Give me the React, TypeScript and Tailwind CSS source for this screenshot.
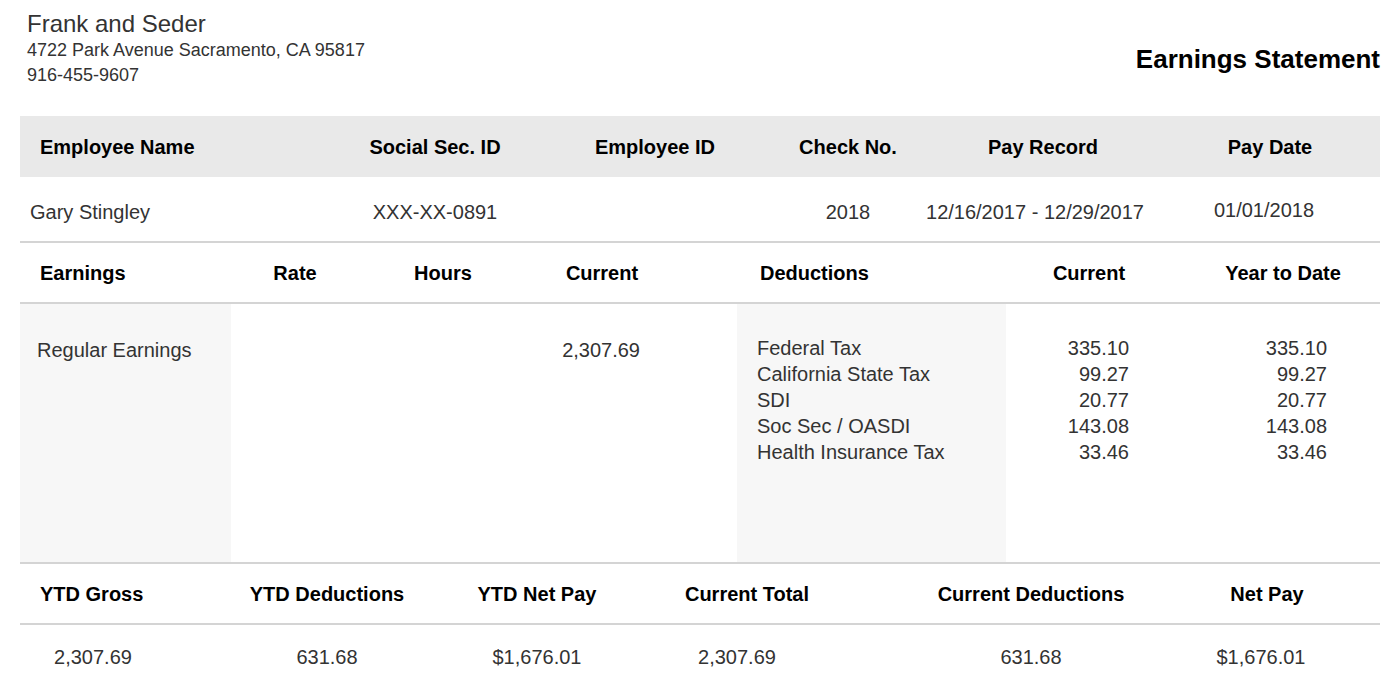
const F = { fontFamily: '"Liberation Sans", Arial, sans-serif' };

const Cell = ({ w, c = "", children }: { w: number; c?: string; children?: React.ReactNode }) => (
  <div className={`flex shrink-0 whitespace-nowrap ${c}`} style={{ width: w }}>{children}</div>
);

export default function App() {
  const ded = [
    ["Federal Tax", "335.10"],
    ["California State Tax", "99.27"],
    ["SDI", "20.77"],
    ["Soc Sec / OASDI", "143.08"],
    ["Health Insurance Tax", "33.46"],
  ];
  return (
    <div className="w-[1400px] h-[700px] bg-white text-[#333] overflow-hidden" style={F}>
      <div className="flex justify-between px-5 pt-[10px] pr-5">
        <div className="pl-[7px]">
          <div className="text-[24px] leading-[28px]">Frank and Seder</div>
          <div className="text-[18px] leading-[25px]">4722 Park Avenue Sacramento, CA 95817</div>
          <div className="text-[18px] leading-[25px]">916-455-9607</div>
        </div>
        <div className="pt-[30px] text-[26px] font-bold text-black">Earnings Statement</div>
      </div>
      <div className="mx-5 mt-[28px]">
        <div className="flex h-[61px] items-center bg-[#e9e9e9] text-[20px] font-bold text-black">
          <Cell w={310} c="pl-5">Employee Name</Cell>
          <Cell w={210} c="justify-center">Social Sec. ID</Cell>
          <Cell w={230} c="justify-center">Employee ID</Cell>
          <Cell w={156} c="justify-center">Check No.</Cell>
          <Cell w={234} c="justify-center">Pay Record</Cell>
          <Cell w={220} c="justify-center">Pay Date</Cell>
        </div>
        <div className="flex h-[66px] items-center text-[20px] border-b-2 border-[#d4d4d4] pt-[6px]">
          <Cell w={310} c="pl-[10px]">Gary Stingley</Cell>
          <Cell w={210} c="justify-center">XXX-XX-0891</Cell>
          <Cell w={230} c="justify-center"></Cell>
          <Cell w={156} c="justify-center">2018</Cell>
          <Cell w={234} c="justify-center pr-4">12/16/2017 - 12/29/2017</Cell>
          <Cell w={220} c="justify-center pr-3 -mt-[4px]">01/01/2018</Cell>
        </div>
        <div className="flex h-[61px] items-center text-[20px] font-bold text-black border-b-2 border-[#d4d4d4]">
          <Cell w={211} c="pl-5">Earnings</Cell>
          <Cell w={128} c="justify-center">Rate</Cell>
          <Cell w={168} c="justify-center">Hours</Cell>
          <Cell w={150} c="justify-center">Current</Cell>
          <Cell w={60} />
          <Cell w={269} c="pl-[23px]">Deductions</Cell>
          <Cell w={166} c="justify-center">Current</Cell>
          <Cell w={218} c="justify-center pl-[4px]">Year to Date</Cell>
        </div>
        <div className="flex h-[260px] text-[20px] border-b-2 border-[#d4d4d4]">
          <Cell w={211} c="bg-[#f7f7f7] pl-[17px] pt-[31px]">Regular Earnings</Cell>
          <Cell w={128} />
          <Cell w={168} />
          <Cell w={150} c="justify-end pr-[37px] pt-[31px]">2,307.69</Cell>
          <Cell w={60} />
          <div className="w-[269px] shrink-0 bg-[#f7f7f7] pl-[20px] pt-[31px] leading-[26px] whitespace-nowrap">
            {ded.map(d => <div key={d[0]}>{d[0]}</div>)}
          </div>
          <div className="w-[166px] shrink-0 pr-[43px] pt-[31px] leading-[26px] text-right">
            {ded.map(d => <div key={d[0]}>{d[1]}</div>)}
          </div>
          <div className="w-[208px] shrink-0 pr-[53px] pt-[31px] leading-[26px] text-right">
            {ded.map(d => <div key={d[0]}>{d[1]}</div>)}
          </div>
        </div>
        <div className="flex h-[61px] items-center text-[20px] font-bold text-black border-b-2 border-[#d4d4d4]">
          <Cell w={146} c="pl-5">YTD Gross</Cell>
          <Cell w={322} c="justify-center">YTD Deductions</Cell>
          <Cell w={98} c="justify-center">YTD Net Pay</Cell>
          <Cell w={322} c="justify-center">Current Total</Cell>
          <Cell w={246} c="justify-center">Current Deductions</Cell>
          <Cell w={226} c="justify-center">Net Pay</Cell>
        </div>
        <div className="flex h-[64px] items-center text-[20px]">
          <Cell w={146} c="justify-center">2,307.69</Cell>
          <Cell w={322} c="justify-center">631.68</Cell>
          <Cell w={98} c="justify-center">$1,676.01</Cell>
          <Cell w={322} c="justify-center -ml-[10px] mr-[10px]">2,307.69</Cell>
          <Cell w={246} c="justify-center">631.68</Cell>
          <Cell w={226} c="justify-center pr-[12px]">$1,676.01</Cell>
        </div>
      </div>
    </div>
  );
}
